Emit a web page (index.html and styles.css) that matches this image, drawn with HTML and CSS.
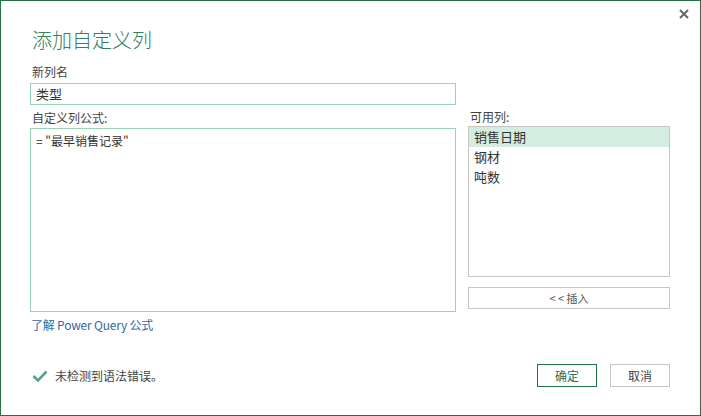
FILE: index.html
```html
<!DOCTYPE html>
<html lang="zh-CN">
<head>
    <meta charset="UTF-8">
    <title>添加自定义列</title>
    <link rel="stylesheet" href="styles.css">
</head>
<body>
    <div class="dialog">
        <a href="#" class="close" title="关闭">
            <svg width="10" height="10" viewBox="0 0 10 10"><path d="M1 1 L9 9 M9 1 L1 9" stroke="#666" stroke-width="2" fill="none"/></svg>
        </a>
        <h1 class="title">添加自定义列</h1>

        <div class="main">
            <div class="left">
                <div class="label">新列名</div>
                <div class="input">类型</div>
                <div class="label label-formula">自定义列公式:</div>
                <div class="formula">= "最早销售记录"</div>
                <a href="#" class="learn">了解 Power Query 公式</a>
            </div>
            <div class="right">
                <div class="label">可用列:</div>
                <ul class="columns">
                    <li class="selected">销售日期</li>
                    <li>钢材</li>
                    <li>吨数</li>
                </ul>
                <button class="btn btn-insert">&lt; &lt; 插入</button>
            </div>
        </div>

        <div class="footer">
            <div class="status">
                <svg width="16" height="12" viewBox="0 0 16 12"><path d="M1.5 6 L6 10.5 L14.5 1.5" stroke="#5da286" stroke-width="2.6" fill="none"/></svg>
                <span>未检测到语法错误。</span>
            </div>
            <div class="actions">
                <button class="btn btn-ok">确定</button>
                <button class="btn">取消</button>
            </div>
        </div>
    </div>
</body>
</html>
```

FILE: styles.css
```css
body {
    margin: 0;
    padding: 0;
    background-color: #fff;
    font-family: "Noto Sans CJK SC", "Noto Sans", sans-serif;
    font-size: 12px;
    color: #444;
}
.dialog {
    position: relative;
    width: 701px;
    height: 416px;
    box-sizing: border-box;
    border: 1px solid #217346;
    padding: 25px 30px 0 29px;
    background: #fff;
}
.close {
    position: absolute;
    top: 8px;
    right: 11px;
    display: block;
    width: 10px;
    height: 10px;
}
.close svg {
    display: block;
}
.title {
    margin: 0;
    font-size: 20px;
    line-height: 28px;
    font-weight: 300;
    color: #31805c;
    padding-left: 2px;
}
.main {
    display: flex;
    gap: 12px;
    margin-top: 10px;
}
.left {
    width: 426px;
    display: flex;
    flex-direction: column;
}
.right {
    width: 202px;
    display: flex;
    flex-direction: column;
    padding-top: 45px;
}
.label {
    line-height: 16px;
    padding-left: 2px;
    color: #444;
}
.input {
    margin-top: 3px;
    height: 22px;
    box-sizing: border-box;
    border: 1px solid #98d4b3;
    padding: 0 5px;
    line-height: 20px;
    font-size: 13px;
    color: #333;
}
.label-formula {
    margin-top: 5px;
}
.formula {
    margin-top: 2px;
    height: 184px;
    box-sizing: border-box;
    border: 1px solid #98d4b3;
    padding: 4px 5px;
    line-height: 16px;
    color: #333;
}
.learn {
    margin-top: 5px;
    line-height: 16px;
    color: #2f6ba3;
    text-decoration: none;
    padding-left: 1px;
    align-self: flex-start;
    letter-spacing: -0.2px;
}
.columns {
    list-style: none;
    margin: 1px 0 0 0;
    padding: 0;
    height: 151px;
    box-sizing: border-box;
    border: 1px solid #c6c6c6;
}
.columns li {
    height: 20px;
    line-height: 20px;
    padding-left: 5px;
    font-size: 13px;
    color: #333;
}
.columns li.selected {
    background-color: #d3eee0;
}
.btn {
    font-family: inherit;
    font-size: 12px;
    color: #444;
    background: #fff;
    border: 1px solid #c6c6c6;
    height: 23px;
    width: 60px;
    padding: 0;
    cursor: pointer;
}
.btn-insert {
    margin-top: 10px;
    width: 100%;
    height: 22px;
    font-size: 11px;
    color: #555;
}
.btn-ok {
    border-color: #217346;
    color: #2f6a4f;
}
.footer {
    display: flex;
    align-items: center;
    justify-content: space-between;
    margin-top: 31px;
}
.status {
    display: flex;
    align-items: center;
    gap: 7px;
    padding-left: 2px;
}
.status svg {
    display: block;
}
.status span {
    line-height: 16px;
    color: #444;
}
.actions {
    display: flex;
    gap: 13px;
}
```
